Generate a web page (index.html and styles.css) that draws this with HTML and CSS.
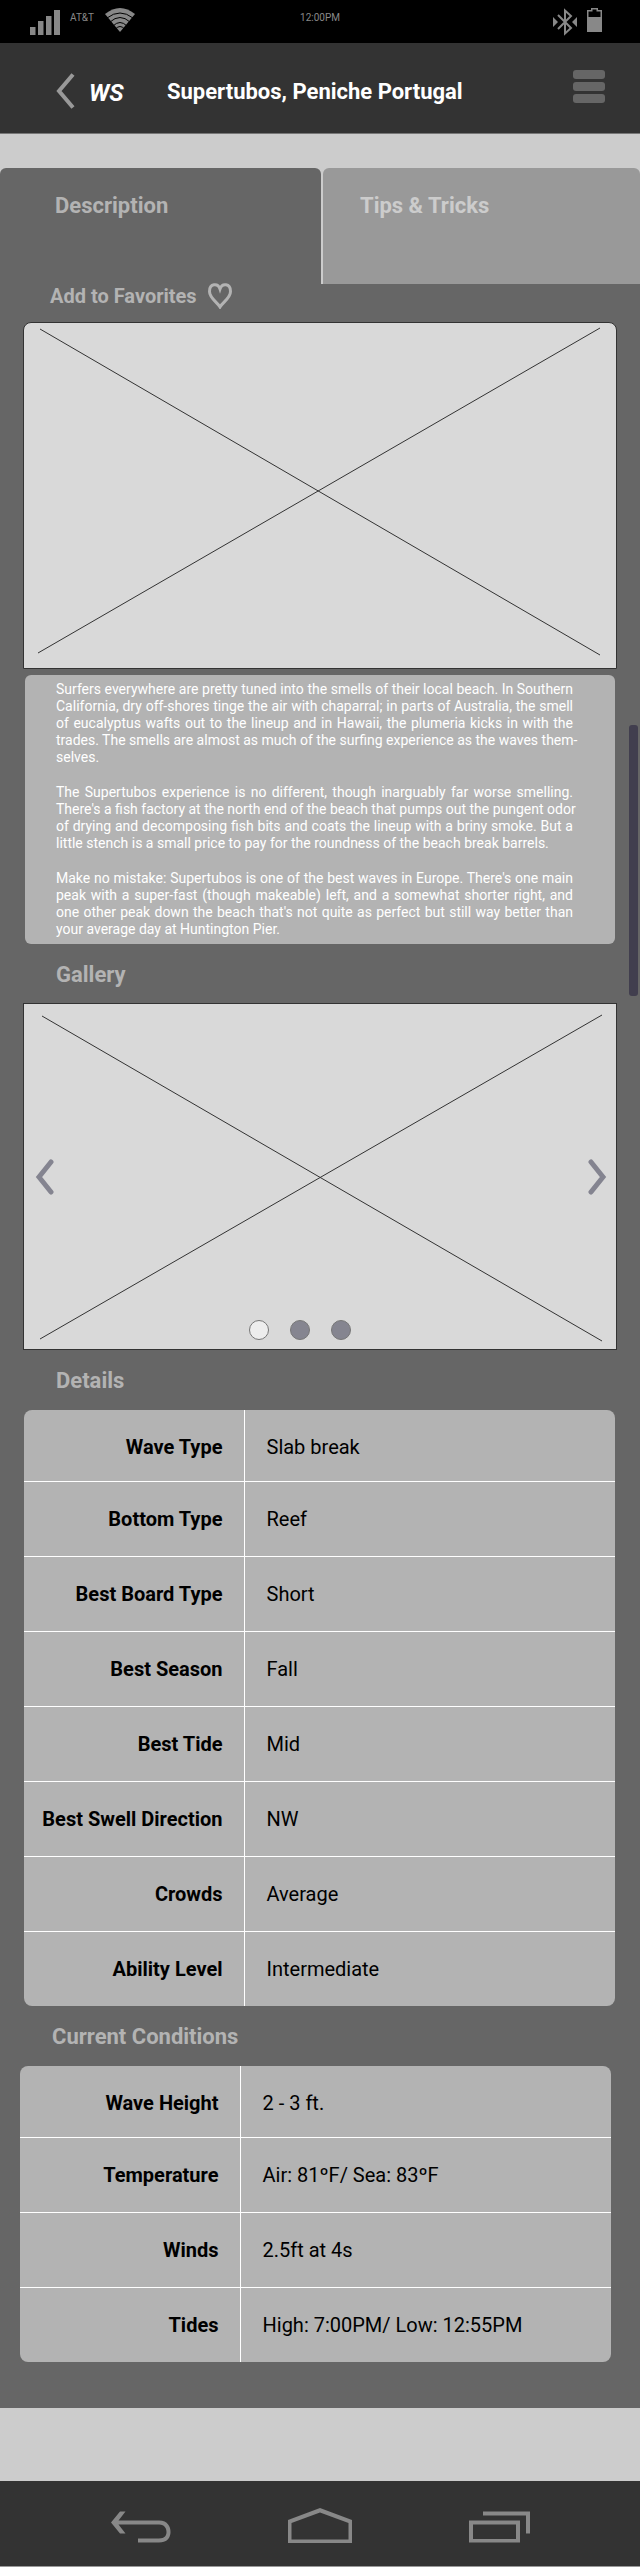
FILE: index.html
```html
<!DOCTYPE html>
<html lang="en">
<head>
<meta charset="utf-8">
<meta name="viewport" content="width=device-width, initial-scale=1">
<title>Supertubos, Peniche Portugal</title>
<link rel="stylesheet" href="styles.css">
</head>
<body>
<div class="status">
  <div class="status-left">
    <svg class="signal" width="30" height="25" viewBox="0 0 30 25" aria-hidden="true"><path d="M0 17h5.500v8H0zM8 11h5.500v14H8zM16 6h5.500v19H16zM24 0h6v25h-6z"/></svg>
    <span class="carrier">AT&amp;T</span>
    <svg class="wifi" width="30" height="24" viewBox="0 0 30 24" aria-hidden="true">
      <path class="fan" d="M15 24 0 6Q15-6 30 6Z"/>
      <path class="cut" d="M2 10Q15 0 28 10M5 14Q15 5 25 14M8 18Q15 11 22 18M10.500 21Q15 16 19.500 21"/>
    </svg>
  </div>
  <time class="clock">12:00PM</time>
  <div class="status-right">
    <svg width="24" height="28" viewBox="0 0 24 28" aria-hidden="true">
      <path class="bt-line" d="M5 7 18 20 12 25.500V2.500L18 8 5 21"/>
      <path d="M0 9 5 14 0 19zM24 9 19 14 24 19z"/>
    </svg>
    <svg width="15" height="24" viewBox="0 0 15 24" aria-hidden="true">
      <path fill-rule="evenodd" d="M4 0h7v2h4v22H0V2h4zM5.500 1.500v2H1.500V9h12V3.500h-4v-2z"/>
    </svg>
  </div>
</div>

<header class="appbar">
  <a class="back" href="#" aria-label="Back to WS">
    <svg width="19" height="36" viewBox="0 0 19 36" aria-hidden="true"><path d="M17 1.500 3 18 17 34.500"/></svg>
    <span class="brand">WS</span>
  </a>
  <h1 class="title">Supertubos, Peniche Portugal</h1>
  <button class="menu" type="button" aria-label="Menu"><i></i><i></i><i></i></button>
</header>

<nav class="tabs">
  <button class="tab active" type="button">Description</button>
  <button class="tab" type="button">Tips &amp; Tricks</button>
</nav>

<main class="content">
  <button class="favorite" type="button">Add to Favorites
    <svg width="24" height="26" viewBox="0 0 24 26" aria-hidden="true"><path d="M12 24C9 19 1.500 15 1.500 8.500 1.500 0 10 0 12 6 14 0 22.500 0 22.500 8.500 22.500 15 15 19 12 24Z"/></svg>
  </button>

  <svg class="placeholder hero" viewBox="0 0 592 345" role="img" aria-label="Beach photo"><path d="M16 6 576 332M576 5 14 330"/></svg>

  <article class="story">
    <p>Surfers everywhere are pretty tuned into the smells of their local beach. In Southern California, dry off-shores tinge the air with chaparral; in parts of Australia, the smell of eucalyptus wafts out to the lineup and in Hawaii, the plumeria kicks in with the <span class="keep">trades. The smells are almost as much of the surfing experience as the waves them-</span><br>selves.</p>
    <p>The Supertubos experience is no different, though inarguably far worse smelling. <span class="keep">There's a fish factory at the north end of the beach that pumps out the pungent odor</span> <span class="keep">of drying and decomposing fish bits and coats the lineup with a briny smoke. But a</span> little stench is a small price to pay for the roundness of the beach break barrels.</p>
    <p>Make no mistake: Supertubos is one of the best waves in Europe. There's one main peak with a super-fast (though makeable) left, and a somewhat shorter right, and one other peak down the beach that's not quite as perfect but still way better than your average day at Huntington Pier.</p>
  </article>

  <h2 class="heading">Gallery</h2>
  <section class="gallery" aria-label="Gallery">
    <svg class="placeholder" viewBox="0 0 592 345" role="img" aria-label="Gallery photo"><path d="M18 12 578 337M578 11 16 335"/></svg>
    <button class="arrow prev" type="button" aria-label="Previous"><svg width="20" height="36" viewBox="0 0 20 36" aria-hidden="true"><path d="M16 3 4 18 16 33"/></svg></button>
    <button class="arrow next" type="button" aria-label="Next"><svg width="20" height="36" viewBox="0 0 20 36" aria-hidden="true"><path d="M4 3 16 18 4 33"/></svg></button>
    <div class="dots">
      <button class="dot current" type="button" aria-label="Photo 1"></button>
      <button class="dot" type="button" aria-label="Photo 2"></button>
      <button class="dot" type="button" aria-label="Photo 3"></button>
    </div>
  </section>

  <h2 class="heading">Details</h2>
  <table class="facts">
    <tr><th scope="row">Wave Type</th><td>Slab break</td></tr>
    <tr><th scope="row">Bottom Type</th><td>Reef</td></tr>
    <tr><th scope="row">Best Board Type</th><td>Short</td></tr>
    <tr><th scope="row">Best Season</th><td>Fall</td></tr>
    <tr><th scope="row">Best Tide</th><td>Mid</td></tr>
    <tr><th scope="row">Best Swell Direction</th><td>NW</td></tr>
    <tr><th scope="row">Crowds</th><td>Average</td></tr>
    <tr><th scope="row">Ability Level</th><td>Intermediate</td></tr>
  </table>

  <section class="conditions">
    <h2 class="heading">Current Conditions</h2>
    <table class="facts">
      <tr><th scope="row">Wave Height</th><td>2 - 3 ft.</td></tr>
      <tr><th scope="row">Temperature</th><td>Air: 81ºF/ Sea: 83ºF</td></tr>
      <tr><th scope="row">Winds</th><td>2.5ft at 4s</td></tr>
      <tr><th scope="row">Tides</th><td>High: 7:00PM/ Low: 12:55PM</td></tr>
    </table>
  </section>
  <div class="scroll-thumb"></div>
</main>

<footer class="system-nav">
  <button type="button" aria-label="Back"><svg width="60" height="35" viewBox="0 0 60 35" aria-hidden="true">
    <path class="solid" d="M9 3.500h5.500L7.500 12.500H48C57 12.500 59.500 19 59.500 24S57 34.500 48 34.500H27V30.500H48C54 30.500 55.500 27 55.500 24S54 16.500 48 16.500H7.500L14.500 25.500H9L0 14.500z"/></svg></button>
  <button type="button" aria-label="Home"><svg width="64" height="35" viewBox="0 0 64 35" aria-hidden="true">
    <path class="solid" fill-rule="evenodd" d="M32 0 64 12V35H0V12zM32 4.500 3.500 15V31.500H60.500V15z"/></svg></button>
  <button type="button" aria-label="Recent apps"><svg width="61" height="35" viewBox="0 0 61 35" aria-hidden="true">
    <path class="solid" fill-rule="evenodd" d="M0 12.500H51V34.500H0zM4 16.500V31H47V16.500zM14 3.500H61V25.500H57V7.500H14z"/></svg></button>
</footer>
</body>
</html>
```
FILE: styles.css
```css
* { box-sizing: border-box; }

body {
  margin: 0;
  background: #ccc;
  color: #000;
  font-family: Roboto, "Liberation Sans", sans-serif;
}

button {
  margin: 0;
  padding: 0;
  border: 0;
  background: none;
  color: inherit;
  font: inherit;
  cursor: pointer;
}

svg { display: block; }

.status {
  display: grid;
  grid-template-columns: 1fr auto 1fr;
  align-items: start;
  height: 43px;
  padding: 8px 38px 0 30px;
  background: #000;
  color: #888;
  fill: #888;
  font-size: 10px;
  line-height: 20px;
}

.status-left, .status-right { display: flex; }
.signal { margin-top: 2px; }
.carrier { margin: 0 11px 0 10px; }
.clock { padding-left: 8px; }
.status-right { justify-content: flex-end; gap: 10px; }
.wifi .cut { fill: none; stroke: #000; stroke-width: 1; }
.bt-line { fill: none; stroke: #888; stroke-width: 2; }

.appbar {
  display: flex;
  align-items: center;
  height: 91px;
  padding: 0 35px 0 56px;
  border-bottom: 1px solid #777;
  background: #333;
  color: #fff;
}

.back {
  display: flex;
  align-items: center;
  gap: 14px;
  width: 111px;
  padding-top: 6px;
  color: #fff;
  text-decoration: none;
}

.back svg { fill: none; stroke: #999; stroke-width: 4; }
.brand { padding-top: 4px; font-size: 24px; font-style: italic; font-weight: 700; }
.title { flex: 1; margin: 0; padding-top: 6px; font-size: 22px; font-weight: 700; }

.menu { display: grid; gap: 3px; width: 32px; padding-bottom: 3px; }
.menu i { height: 9px; border-radius: 3px; background: #666; }

.tabs {
  display: grid;
  grid-template-columns: 1fr 317px;
  gap: 2px;
  margin-top: 34px;
}

.tab {
  height: 116px;
  padding: 0 37px 42px;
  border-radius: 6px 6px 0 0;
  background: #999;
  color: #ccc;
  font-size: 22px;
  font-weight: 700;
  text-align: left;
}

.tab.active { padding-left: 55px; background: #666; color: #b3b3b3; }

.content {
  position: relative;
  padding: 0 23px 46px;
  background: #666;
}

.favorite {
  display: flex;
  align-items: center;
  gap: 11px;
  height: 24px;
  margin-left: 27px;
  color: #b3b3b3;
  font-size: 20px;
  font-weight: 700;
}

.favorite svg { fill: none; stroke: #b3b3b3; stroke-width: 3; }

.placeholder {
  width: 100%;
  height: auto;
  border: 1px solid #333;
  background: #d9d9d9;
  fill: none;
  stroke: #333;
}

.hero { margin-top: 14px; border-radius: 8px 8px 0 0; }

.story {
  margin: 6px 2px 0;
  padding: 6px 42px 6px 31px;
  border-radius: 6px;
  background: #b3b3b3;
  color: #fff;
  font-size: 14px;
  line-height: 17px;
  text-align: justify;
}

.story p { margin: 0; }
.story p + p { margin-top: 18px; }
.keep { white-space: nowrap; }

.heading {
  margin: 0 0 0 33px;
  padding: 18px 0 15px;
  color: #b3b3b3;
  font-size: 22px;
  font-weight: 700;
  line-height: 26px;
}

.gallery { position: relative; }

.arrow { position: absolute; top: 50%; margin-top: -18px; }
.arrow svg { fill: none; stroke: #848490; stroke-width: 5; stroke-linecap: round; }
.prev { left: 12px; }
.next { right: 10px; }

.dots {
  position: absolute;
  bottom: 10px;
  left: 38%;
  display: flex;
  gap: 21px;
}

.dot {
  width: 20px;
  height: 20px;
  border: 1px solid #777;
  border-radius: 50%;
  background: #858590;
}

.dot.current { background: #ededed; }

.facts {
  width: calc(100% - 3px);
  margin: 1px 0 0 1px;
  border-collapse: collapse;
  border-radius: 8px;
  background: #b3b3b3;
  font-size: 20px;
  line-height: 24px;
}

.facts th, .facts td { height: 75px; padding: 0 22px; }
.facts tr:first-child > * { height: 71px; padding-top: 3px; }
.facts tr + tr > * { border-top: 1px solid #fff; }
.facts th { width: 220px; padding: 0 21px 0 10px; border-right: 1px solid #fff; font-weight: 700; text-align: right; white-space: nowrap; }
.facts td { font-weight: 400; }

.conditions { margin: 0 4px 0 -4px; }

.scroll-thumb {
  position: absolute;
  top: 441px;
  right: 2px;
  width: 9px;
  height: 271px;
  border-radius: 3px;
  background: #413e4e;
}

.system-nav {
  display: grid;
  grid-template-columns: repeat(3, 1fr);
  justify-items: center;
  align-items: center;
  height: 86px;
  margin-top: 73px;
  padding: 4px 51px 0;
  border-bottom: 1px solid #999;
  background: #333;
}

.system-nav .solid { fill: #888; }
```
